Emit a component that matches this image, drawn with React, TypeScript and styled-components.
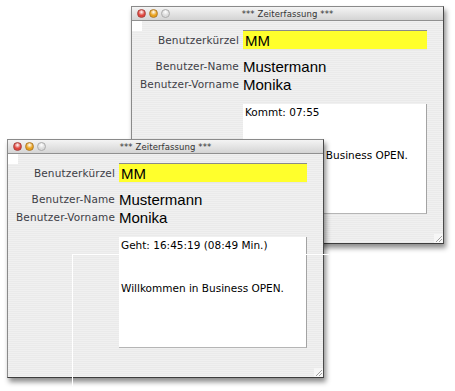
import React from "react";
import styled, { createGlobalStyle } from "styled-components";

const GlobalStyle = createGlobalStyle`
  html, body {
    margin: 0;
    padding: 0;
    background: #ffffff;
  }
`;

const Desktop = styled.div`
  position: relative;
  width: 455px;
  height: 391px;
  overflow: hidden;
  background: #ffffff;
  font-family: "DejaVu Sans", "Liberation Sans", sans-serif;
`;

const Window = styled.div<{ $left: number; $top: number; $width: number; $height: number }>`
  position: absolute;
  left: ${(p) => p.$left}px;
  top: ${(p) => p.$top}px;
  width: ${(p) => p.$width}px;
  height: ${(p) => p.$height}px;
  box-sizing: border-box;
  display: flex;
  flex-direction: column;
  border: 1px solid #8a8a8a;
  border-bottom-color: #3c3c3c;
  border-right-color: #4a4a4a;
  box-shadow: 2px 4px 5px rgba(0, 0, 0, 0.45);
  background: repeating-linear-gradient(to bottom, #f0f0f0 0 1px, #eaeaea 1px 2px);
`;

const TitleBar = styled.div`
  position: relative;
  height: 13px;
  flex: none;
  display: flex;
  align-items: center;
  justify-content: center;
  background: linear-gradient(to bottom, #f4f4f4, #d4d4d4);
  border-bottom: 1px solid #909090;
`;

const Lights = styled.div`
  position: absolute;
  left: 5px;
  top: 2px;
  display: flex;
  gap: 3px;
`;

const Light = styled.span<{ $color: string; $edge: string }>`
  width: 9px;
  height: 9px;
  border-radius: 50%;
  box-sizing: border-box;
  border: 1px solid ${(p) => p.$edge};
  background: radial-gradient(circle at 50% 30%, #ffffff 0, ${(p) => p.$color} 55%);
`;

const Title = styled.span`
  font-size: 8.5px;
  color: #333;
  letter-spacing: 0.1px;
`;

const Content = styled.div`
  position: relative;
  flex: 1;
  display: grid;
  grid-template-columns: 106px 1fr;
  grid-auto-rows: min-content;
  column-gap: 4px;
  padding: 9px 16px 0 1px;
`;

const Marker = styled.div`
  position: absolute;
  left: 0;
  top: 0;
  width: 10px;
  height: 10px;
  background: #ffffff;
`;

const Label = styled.div<{ $h: number }>`
  height: ${(p) => p.$h}px;
  display: flex;
  align-items: center;
  justify-content: flex-end;
  font-size: 10.5px;
  letter-spacing: 0.15px;
  color: #3d3d46;
  white-space: nowrap;
`;

const Value = styled.div<{ $h: number }>`
  height: ${(p) => p.$h}px;
  display: flex;
  align-items: center;
  font-family: "Liberation Sans", Arial, sans-serif;
  font-size: 15px;
  color: #000;
  white-space: nowrap;
`;

const Field = styled(Value)`
  box-sizing: border-box;
  padding-left: 2px;
  background: #ffff2c;
  border-top: 1px solid #8a8a8a;
  border-bottom: 1px solid #e6e6e6;
`;

const FirstGap = styled.div`
  grid-column: 1 / span 2;
  height: 7px;
`;

const MessageBox = styled.div<{ $h: number }>`
  grid-column: 2;
  margin-top: 11px;
  height: ${(p) => p.$h}px;
  box-sizing: border-box;
  padding: 1px 0 0 2px;
  background: #ffffff;
  border-right: 1px solid #a3a3a3;
  border-bottom: 1px solid #b5b5b5;
  font-size: 10.5px;
  line-height: 14.33px;
  color: #000;
  white-space: pre-line;
  overflow: hidden;
`;

const Grip = styled.svg`
  position: absolute;
  right: 0;
  bottom: 0;
`;

const Leader = styled.div`
  position: absolute;
  left: 72px;
  top: 254px;
  width: 256px;
  height: 131px;
  border-top: 1px solid #ffffff;
  border-left: 1px solid #ffffff;
`;

type WinProps = {
  left: number;
  top: number;
  width: number;
  height: number;
  boxHeight: number;
  message: string;
};

const ZeitWindow: React.FC<WinProps> = ({ left, top, width, height, boxHeight, message }) => (
  <Window $left={left} $top={top} $width={width} $height={height}>
    <TitleBar>
      <Lights>
        <Light $color="#e0453d" $edge="#a8413c" />
        <Light $color="#e9a21c" $edge="#b07a2a" />
        <Light $color="#dcdcdc" $edge="#ababab" />
      </Lights>
      <Title>*** Zeiterfassung ***</Title>
    </TitleBar>
    <Content>
      <Marker />
      <Label $h={20}>Benutzerkürzel</Label>
      <Field $h={20}>MM</Field>
      <FirstGap />
      <Label $h={18}>Benutzer-Name</Label>
      <Value $h={18}>Mustermann</Value>
      <Label $h={18}>Benutzer-Vorname</Label>
      <Value $h={18}>Monika</Value>
      <MessageBox $h={boxHeight}>{message}</MessageBox>
      <Grip width="9" height="9" viewBox="0 0 9 9">
        <rect width="9" height="9" fill="#f6f6f6" />
        <path d="M2 8 L8 2 M5 8 L8 5" stroke="#8a8a8a" strokeWidth="0.8" />
        <path d="M3 8.5 L8.5 3 M6 8.5 L8.5 6" stroke="#ffffff" strokeWidth="0.7" />
      </Grip>
    </Content>
  </Window>
);

export default function App() {
  return (
    <Desktop>
      <GlobalStyle />
      <ZeitWindow
        left={131}
        top={6}
        width={313}
        height={238}
        boxHeight={110}
        message={"Kommt: 07:55\n\n\nWillkommen in Business OPEN."}
      />
      <ZeitWindow
        left={7}
        top={139}
        width={317}
        height={239}
        boxHeight={111}
        message={"Geht: 16:45:19 (08:49 Min.)\n\n\nWillkommen in Business OPEN."}
      />
      <Leader />
    </Desktop>
  );
}
